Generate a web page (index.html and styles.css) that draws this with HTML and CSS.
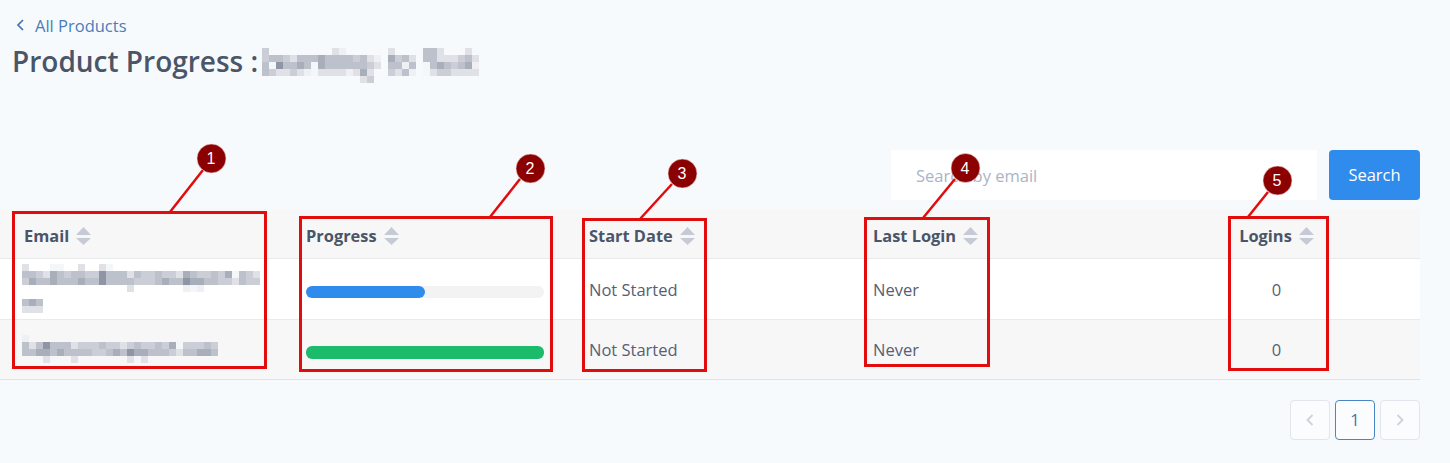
FILE: index.html
```html
<!DOCTYPE html>
<html lang="en">
<head>
<meta charset="utf-8">
<title>Product Progress</title>
<link rel="stylesheet" href="styles.css">
</head>
<body>
<main class="page">
  <header class="head">
    <a class="back" href="#"><svg class="back-icon" viewBox="0 0 10 14"><polyline points="8,2 3,7 8,12"/></svg>All Products</a>
    <div class="title-row">
      <h1 class="title">Product Progress :</h1>
      <div class="mosaic mosaic-title" aria-hidden="true">
        <i class="d"></i><i></i><i></i><i></i><i></i><i></i><i></i><i></i><i></i><i></i><i class="e"></i><i class="f"></i><i></i><i></i><i></i><i></i><i></i><i></i><i class="e"></i><i></i><i></i><i></i><i></i><i class="c"></i><i class="c"></i><i class="e"></i><i></i><i></i><i></i><i class="e"></i><i></i>
        <i class="d"></i><i class="c"></i><i class="c"></i><i class="d"></i><i class="e"></i><i class="c"></i><i class="c"></i><i class="c"></i><i class="b"></i><i class="c"></i><i class="c"></i><i class="c"></i><i class="c"></i><i class="d"></i><i class="c"></i><i class="e"></i><i class="f"></i><i></i><i class="b"></i><i class="d"></i><i class="c"></i><i class="e"></i><i></i><i class="c"></i><i class="c"></i><i class="e"></i><i class="e"></i><i class="e"></i><i class="d"></i><i class="c"></i><i class="e"></i>
        <i class="c"></i><i class="g"></i><i class="a"></i><i class="c"></i><i class="c"></i><i class="b"></i><i class="c"></i><i class="g"></i><i class="b"></i><i class="c"></i><i class="c"></i><i class="c"></i><i class="c"></i><i class="c"></i><i class="c"></i><i class="d"></i><i class="e"></i><i></i><i class="c"></i><i class="c"></i><i class="f"></i><i class="c"></i><i></i><i class="g"></i><i class="c"></i><i class="b"></i><i class="c"></i><i class="d"></i><i class="c"></i><i class="b"></i><i class="f"></i>
        <i class="c"></i><i class="d"></i><i class="e"></i><i class="e"></i><i class="d"></i><i class="e"></i><i class="f"></i><i class="g"></i><i class="e"></i><i class="e"></i><i class="e"></i><i class="e"></i><i class="f"></i><i class="e"></i><i class="b"></i><i class="e"></i><i></i><i></i><i class="d"></i><i class="e"></i><i class="c"></i><i class="f"></i><i></i><i class="g"></i><i class="e"></i><i class="d"></i><i class="d"></i><i class="e"></i><i class="e"></i><i class="e"></i><i class="e"></i>
        <i></i><i></i><i></i><i></i><i></i><i></i><i></i><i></i><i></i><i></i><i></i><i></i><i></i><i></i><i class="e"></i><i class="d"></i>
      </div>
    </div>
  </header>

  <form class="toolbar">
    <input class="search-input" type="text" placeholder="Search by email">
    <button class="search-btn" type="button">Search</button>
  </form>

  <table class="grid">
    <thead>
      <tr>
        <th class="col-email"><span class="th-in">Email<svg class="sort" viewBox="0 0 15 18"><polygon points="7.5,0 15,8 0,8"/><polygon points="0,11 15,11 7.5,18"/></svg></span></th>
        <th class="col-progress"><span class="th-in">Progress<svg class="sort" viewBox="0 0 15 18"><polygon points="7.5,0 15,8 0,8"/><polygon points="0,11 15,11 7.5,18"/></svg></span></th>
        <th class="col-start"><span class="th-in">Start Date<svg class="sort" viewBox="0 0 15 18"><polygon points="7.5,0 15,8 0,8"/><polygon points="0,11 15,11 7.5,18"/></svg></span></th>
        <th class="col-last"><span class="th-in">Last Login<svg class="sort" viewBox="0 0 15 18"><polygon points="7.5,0 15,8 0,8"/><polygon points="0,11 15,11 7.5,18"/></svg></span></th>
        <th class="col-logins"><span class="th-in">Logins<svg class="sort" viewBox="0 0 15 18"><polygon points="7.5,0 15,8 0,8"/><polygon points="0,11 15,11 7.5,18"/></svg></span></th>
      </tr>
    </thead>
    <tbody>
      <tr class="row-a">
        <td class="col-email">
          <div class="mosaic mosaic-email1" aria-hidden="true">
            <i class="e"></i><i></i><i></i><i></i><i class="g"></i><i class="g"></i><i></i><i></i><i class="e"></i><i></i><i></i><i class="e"></i><i class="g"></i><i></i><i></i><i></i><i></i><i></i><i></i><i></i><i></i><i></i><i></i><i></i><i></i><i></i><i></i><i></i><i></i><i></i><i></i><i></i><i></i><i></i>
            <i class="c"></i><i class="c"></i><i class="d"></i><i class="e"></i><i class="b"></i><i class="c"></i><i class="d"></i><i class="c"></i><i class="c"></i><i class="d"></i><i class="d"></i><i class="a"></i><i class="c"></i><i class="c"></i><i class="c"></i><i class="e"></i><i class="c"></i><i class="d"></i><i class="d"></i><i class="c"></i><i class="d"></i><i class="d"></i><i class="e"></i><i class="b"></i><i class="c"></i><i class="d"></i><i class="d"></i><i class="c"></i><i class="d"></i><i class="b"></i><i class="g"></i><i class="c"></i><i class="d"></i><i class="e"></i>
            <i class="d"></i><i class="b"></i><i class="c"></i><i class="c"></i><i class="b"></i><i class="c"></i><i class="c"></i><i class="c"></i><i class="b"></i><i class="c"></i><i class="c"></i><i class="a"></i><i class="c"></i><i class="c"></i><i class="c"></i><i class="c"></i><i class="d"></i><i class="d"></i><i class="d"></i><i class="c"></i><i class="b"></i><i class="c"></i><i class="c"></i><i class="a"></i><i class="b"></i><i class="b"></i><i class="c"></i><i class="c"></i><i class="d"></i><i class="d"></i><i class="e"></i><i class="c"></i><i class="d"></i><i class="d"></i>
            <i></i><i></i><i></i><i></i><i></i><i></i><i></i><i></i><i></i><i></i><i></i><i></i><i></i><i></i><i></i><i class="e"></i><i></i><i></i><i></i><i></i><i></i><i></i><i></i><i class="f"></i><i class="g"></i><i class="f"></i>
          </div>
          <div class="mosaic mosaic-email1b" aria-hidden="true">
            <i class="c"></i><i class="b"></i><i class="c"></i>
            <i class="e"></i><i class="e"></i><i class="e"></i>
          </div>
        </td>
        <td class="col-progress"><div class="track"><div class="fill fill-half"></div></div></td>
        <td class="col-start">Not Started</td>
        <td class="col-last">Never</td>
        <td class="col-logins">0</td>
      </tr>
      <tr class="row-b">
        <td class="col-email">
          <div class="mosaic mosaic-email2" aria-hidden="true">
            <i class="f"></i><i></i><i></i><i></i><i></i><i></i><i></i><i></i><i></i><i></i><i></i><i></i><i></i><i></i><i></i><i></i><i></i><i></i><i></i><i></i><i></i><i></i><i></i><i></i><i></i><i></i><i></i><i></i>
            <i class="c"></i><i class="e"></i><i class="c"></i><i class="a"></i><i class="c"></i><i class="c"></i><i class="c"></i><i class="e"></i><i class="d"></i><i class="d"></i><i class="d"></i><i class="c"></i><i class="d"></i><i class="d"></i><i class="e"></i><i class="d"></i><i class="c"></i><i class="d"></i><i class="d"></i><i class="c"></i><i class="d"></i><i class="b"></i><i class="g"></i><i class="d"></i><i class="d"></i><i class="d"></i><i class="c"></i><i class="d"></i>
            <i class="c"></i><i class="c"></i><i class="b"></i><i class="b"></i><i class="c"></i><i class="b"></i><i class="c"></i><i class="c"></i><i class="c"></i><i class="c"></i><i class="d"></i><i class="d"></i><i class="c"></i><i class="b"></i><i class="c"></i><i class="a"></i><i class="b"></i><i class="b"></i><i class="c"></i><i class="c"></i><i class="c"></i><i class="d"></i><i class="e"></i><i class="c"></i><i class="c"></i><i class="b"></i><i class="b"></i><i class="c"></i>
            <i></i><i></i><i></i><i class="e"></i><i class="g"></i><i></i><i></i><i class="e"></i><i></i><i></i><i></i><i></i><i></i><i></i><i></i><i class="e"></i><i class="g"></i><i class="e"></i>
          </div>
        </td>
        <td class="col-progress"><div class="track track-tall"><div class="fill fill-full"></div></div></td>
        <td class="col-start">Not Started</td>
        <td class="col-last">Never</td>
        <td class="col-logins">0</td>
      </tr>
    </tbody>
  </table>

  <nav class="pager">
    <a class="page-btn" href="#"><svg class="page-icon" viewBox="0 0 10 14"><polyline points="7.5,2 2.5,7 7.5,12"/></svg></a>
    <a class="page-btn page-current" href="#">1</a>
    <a class="page-btn" href="#"><svg class="page-icon" viewBox="0 0 10 14"><polyline points="2.5,2 7.5,7 2.5,12"/></svg></a>
  </nav>
</main>

<svg class="notes" viewBox="0 0 1450 463" aria-label="Numbered annotations">
  <rect class="note-box" x="13.5" y="212.5" width="252" height="155"/>
  <rect class="note-box" x="300.5" y="217.5" width="251" height="153"/>
  <rect class="note-box" x="583.5" y="219.5" width="122" height="151"/>
  <rect class="note-box" x="865.5" y="218.5" width="123" height="147"/>
  <rect class="note-box" x="1229.5" y="217.5" width="98" height="152"/>
  <line class="note-line" x1="203" y1="170" x2="170" y2="212"/>
  <line class="note-line" x1="520" y1="179" x2="490" y2="217"/>
  <line class="note-line" x1="672" y1="184" x2="640" y2="219"/>
  <line class="note-line" x1="955" y1="179" x2="923" y2="218"/>
  <line class="note-line" x1="1268" y1="192" x2="1248" y2="217"/>
  <circle class="note-dot" cx="211.5" cy="158.5" r="14.5"/>
  <circle class="note-dot" cx="530.5" cy="168.5" r="14.5"/>
  <circle class="note-dot" cx="682.5" cy="173.5" r="14.5"/>
  <circle class="note-dot" cx="965.5" cy="168" r="14.5"/>
  <circle class="note-dot" cx="1277.5" cy="180.5" r="14.5"/>
  <text class="note-num" x="211" y="164">1</text>
  <text class="note-num" x="530" y="174">2</text>
  <text class="note-num" x="682" y="179">3</text>
  <text class="note-num" x="965" y="174">4</text>
  <text class="note-num" x="1277" y="186">5</text>
</svg>
</body>
</html>
```

FILE: styles.css
```css
* { box-sizing: border-box; }

html, body {
  margin: 0;
  height: 100%;
}

body {
  position: relative;
  overflow: hidden;
  background: #f7fafc;
  color: #566072;
  font-family: "Open Sans", "Noto Sans", sans-serif;
  font-size: 16.5px;
}

.page {
  width: 1420px;
}

.head {
  padding: 13px 0 0 12px;
  height: 150px;
}

.back {
  display: flex;
  align-items: center;
  gap: 10px;
  height: 24px;
  padding-left: 3px;
  color: #4a7dba;
  text-decoration: none;
}

.back-icon {
  width: 10px;
  height: 14px;
  fill: none;
  stroke: #3f74b5;
  stroke-width: 1.7;
}

.title-row {
  display: flex;
  align-items: flex-start;
  margin-top: 2px;
}

.title {
  margin: 0;
  font-size: 28px;
  line-height: 44px;
  font-weight: 600;
  color: #4a5568;
}

.mosaic {
  display: grid;
  grid-template-columns: repeat(var(--cells), 7px);
  grid-auto-rows: 7px;
}

.mosaic i { display: block; }
.mosaic .a { background: #8f95a5; }
.mosaic .b { background: #a9aebb; }
.mosaic .c { background: #bcc1cc; }
.mosaic .d { background: #cbced6; }
.mosaic .e { background: #dfe1e6; }
.mosaic .f { background: #eef0f4; }
.mosaic .g { background: #f4f7fa; }

.mosaic-title {
  --cells: 31;
  margin: 9px 0 0 4px;
}

.mosaic-email1 { --cells: 34; }
.mosaic-email1b { --cells: 3; margin-top: 7px; }
.mosaic-email2 { --cells: 28; }

.toolbar {
  display: flex;
  justify-content: flex-end;
  gap: 12px;
  height: 50px;
  margin-bottom: 9px;
}

.search-input {
  width: 426px;
  height: 50px;
  padding: 0 25px;
  border: 0;
  background: #fff;
  color: #4a5568;
  font: inherit;
  outline: 0;
}

.search-input::placeholder {
  color: #a9b5c6;
  opacity: 1;
}

.search-btn {
  width: 91px;
  height: 50px;
  padding-bottom: 3px;
  border: 0;
  border-radius: 4px;
  background: #2f8bec;
  color: #fff;
  font: inherit;
}

.grid {
  width: 1420px;
  border-collapse: collapse;
  table-layout: fixed;
  border-bottom: 1px solid #dfe2e6;
}

.grid th,
.grid td {
  padding: 0 12px;
  text-align: left;
  font-weight: 400;
}

.grid thead tr {
  height: 49px;
  background: #f7f7f8;
  border-bottom: 1px solid #e9eaec;
}

.grid th {
  padding-top: 5px;
  font-weight: 700;
  font-size: 16.4px;
  color: #4a5568;
}

.row-a {
  height: 61px;
  background: #fff;
  border-bottom: 1px solid #e9eaec;
}

.row-b {
  height: 60px;
  background: #f7f7f8;
}

.grid .row-a td { padding-top: 2px; }

.grid .col-email { width: 294px; padding-left: 24px; }
.grid td.col-email { padding-left: 22px; padding-right: 0; }
.grid .row-a td.col-email { padding-top: 0; }
.grid .col-progress { width: 283px; }
.grid td.col-progress,
.grid .row-a td.col-progress { padding-top: 6px; }
.grid .col-start { width: 284px; }
.grid .col-last { width: 272px; }
.grid .col-logins { width: 287px; text-align: center; }

.th-in {
  display: inline-flex;
  align-items: center;
  gap: 7px;
}

.sort {
  width: 15px;
  height: 18px;
  fill: #c6cad4;
}

.track {
  width: 238px;
  height: 12px;
  border-radius: 6px;
  background: #f3f3f4;
}

.track-tall { height: 13px; }

.fill {
  height: 100%;
  border-radius: 6px;
}

.fill-half { width: 50%; background: #2f8bec; }
.fill-full { width: 100%; background: #1cbb6c; }

.pager {
  display: flex;
  justify-content: flex-end;
  gap: 5px;
  margin-top: 20px;
}

.page-btn {
  display: flex;
  align-items: center;
  justify-content: center;
  width: 40px;
  height: 40px;
  border: 1px solid #e2e6ec;
  border-radius: 4px;
  background: #fafcfd;
  color: #3f74b5;
  text-decoration: none;
}

.page-current {
  border-color: #4a86c5;
}

.page-icon {
  width: 10px;
  height: 14px;
  fill: none;
  stroke: #cfd2d6;
  stroke-width: 1.8;
}

.notes {
  position: absolute;
  left: 0;
  top: 0;
  width: 1450px;
  height: 463px;
  pointer-events: none;
}

.note-box {
  fill: none;
  stroke: #e20c0c;
  stroke-width: 3;
}

.note-line {
  stroke: #e20c0c;
  stroke-width: 2.5;
}

.note-dot {
  fill: #8b0000;
  stroke: #f3dede;
  stroke-width: 0.6;
}

.note-num {
  fill: #fff;
  font-family: "Liberation Sans", Arial, sans-serif;
  font-size: 16px;
  text-anchor: middle;
}
```
